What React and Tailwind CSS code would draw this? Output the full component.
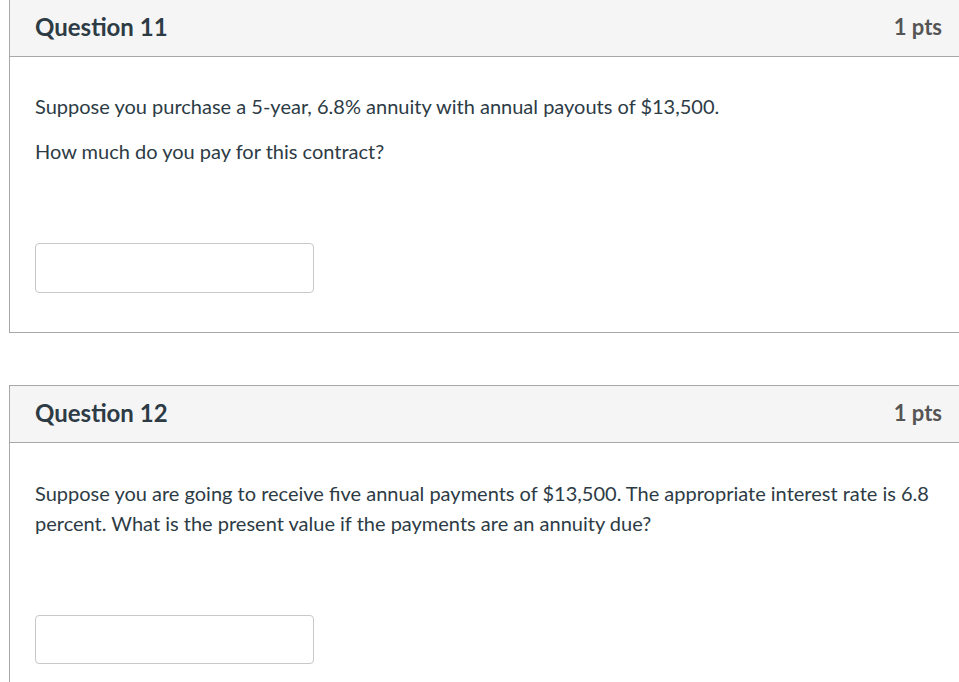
export default function App() {
  const Card = ({ title, children }) => (
    <div className="ml-[9px] border-l border-y border-[#a8a8a8] bg-white">
      <div className="h-[57px] flex items-center justify-between pl-[25px] pr-[17px] bg-[#f5f5f5] border-b border-[#a8a8a8]">
        <span className="text-[24px] font-bold text-[#2d3b45] mb-[2px]">{title}</span>
        <span className="text-[22px] font-bold text-[#555] mb-[3px]">1 pts</span>
      </div>
      {children}
    </div>
  );
  return (
    <div className="w-[959px] h-[682px] overflow-hidden bg-white text-[#2d3b45]" style={{ fontFamily: 'Lato, "Open Sans", sans-serif' }}>
      <div className="-mt-px">
        <Card title="Question 11">
          <div className="pl-[25px] pt-[34px] pb-[39px] text-[20px] leading-[30px]">
            <p>Suppose you purchase a 5-year, 6.8% annuity with annual payouts of $13,500.</p>
            <p className="mt-[15px]">How much do you pay for this contract?</p>
            <input className="mt-[77px] block w-[279px] h-[50px] border border-[#c8c8c8] rounded-[4px] bg-white" />
          </div>
        </Card>
      </div>
      <div className="mt-[52px]">
        <Card title="Question 12">
          <div className="pl-[25px] pr-[20px] pt-[35px] pb-[39px] text-[20px] leading-[30px]">
            <p>Suppose you are going to receive five annual payments of $13,500. The appropriate interest rate is 6.8 percent. What is the present value if the payments are an annuity due?</p>
            <input className="mt-[77px] block w-[279px] h-[49px] border border-[#c8c8c8] rounded-[4px] bg-white" />
          </div>
        </Card>
      </div>
    </div>
  );
}
